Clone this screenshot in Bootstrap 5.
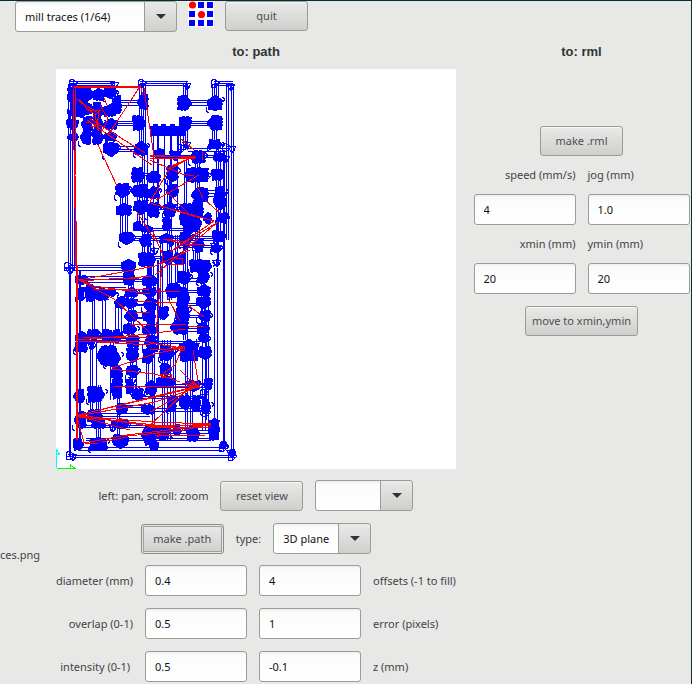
<!DOCTYPE html>
<html lang="en">
<head>
<meta charset="utf-8">
<meta name="viewport" content="width=device-width, initial-scale=1">
<title>mill traces</title>
<link href="https://cdn.jsdelivr.net/npm/bootstrap@5.3.0/dist/css/bootstrap.min.css" rel="stylesheet">
<style>
  body { background: #e8e8e6; color: #3f4446; font: 11px/18px "Noto Sans", "Open Sans", sans-serif; border-top: 1px solid #0b2a38; border-right: 1px solid #0b2f34; min-height: 100vh; overflow: hidden; }
  .top-bar { padding-left: 15px; }
  .btn-gtk { font-size: 11px; line-height: 18px; height: 30px; min-width: 83px; padding: 5px 6px; border: 1px solid #9b9b97; border-radius: 3px; color: #4a4f51; background: linear-gradient(#e9e9e7, #cfcfcd); box-shadow: inset 0 1px #f6f6f5; }
  .btn-gtk.is-focused { border-color: #8c8c89; box-shadow: inset 0 0 0 1px #e4e4e2, inset 0 0 0 2px #a0a09d; }
  .field, .picker { font-size: 11px; line-height: 18px; height: 31px; padding: 5px 9px; border: 1px solid #9b9b97; border-radius: 3px; color: #111; }
  .field { width: 102px; background: linear-gradient(#eee, #fbfbfb 3px, #fff); }
  .picker { width: 98px; appearance: none; padding-right: 33px;
    background: url("data:image/svg+xml,%3Csvg xmlns='http://www.w3.org/2000/svg' width='10' height='6'%3E%3Cpath d='M0 0h10L5 5z' fill='%232e3436'/%3E%3C/svg%3E") right 10px center no-repeat, linear-gradient(#9b9b97, #9b9b97) right 31px top no-repeat, linear-gradient(#e9e9e7, #cfcfcd) right top no-repeat, linear-gradient(#eee, #fbfbfb 3px, #fff);
    background-size: 10px 6px, 1px 100%, 31px 100%, auto; }
  .picker-wide { width: 162px; }
  .logo { width: 26px; height: 26px; margin: 0 11px; }
  .layout { display: grid; grid-template-columns: 50px minmax(0, 412fr) minmax(226px, 229fr); }
  .panel-title { font: bold 13px/18px "Liberation Sans", sans-serif; color: #2e3436; margin: 0; padding: 11px 0 8px; text-align: center; }
  .file-name { padding-top: 514px; }
  .toolpath { display: block; width: 100%; max-width: 400px; background: #fff; }
  .view-area { gap: 11px; }
  .stack { gap: 12px; }
  .params { display: grid; grid-template-columns: 83px 102px 102px 89px; gap: 12px; align-items: center; justify-content: center; padding-top: 11px; }
  .params label { white-space: nowrap; }
  .rml-panel { padding-left: 10px; }
  .rml { padding-top: 57px; gap: 10px; }
  .rml-fields { display: grid; grid-template-columns: 102px 102px; column-gap: 12px; row-gap: 10px; justify-content: center; align-items: center; margin-bottom: 2px; }
  .rml-fields label { height: 18px; }
</style>
<script src="https://cdn.jsdelivr.net/npm/bootstrap@5.3.0/dist/js/bootstrap.bundle.min.js"></script>
</head>
<body>
<header class="top-bar d-flex align-items-start">
  <select class="picker picker-wide" aria-label="Process"><option>mill traces (1/64)</option></select>
  <svg class="logo" viewBox="0 0 26 26" aria-hidden="true">
    <path fill="#fff" d="M0 0h26v26H0z"/>
    <path fill="#00f" d="M10 1h6v6h-6zM19 1h6v6h-6zM1 10h6v6H1zM19 10h6v6h-6zM1 19h6v6H1zM10 19h6v6h-6zM19 19h6v6h-6z"/>
    <circle cx="4.500" cy="4" r="3.600" fill="red"/><circle cx="13.500" cy="13.500" r="3.600" fill="red"/>
  </svg>
  <button type="button" class="btn btn-gtk">quit</button>
</header>
<main class="layout">
  <div class="file-name">ces.png</div>
  <section>
    <h2 class="panel-title">to: path</h2>
    <div class="view-area d-flex flex-column align-items-center">
      <svg class="toolpath" viewBox="56 69 400 400" shape-rendering="crispEdges" role="img" aria-label="Tool path">
        <path id="runs" stroke="#00f" fill="none"/>
        <path id="pads" fill="#00f"/>
        <path id="ticks" stroke="#00f" fill="none"/>
        <path id="moves" stroke="red" fill="none"/>
        <path stroke="#0ff" fill="none" d="M56.500 468V450l3 4-3 1"/>
        <path stroke="#0f0" fill="none" d="M57 468.500H75l-5-4v4"/>
      </svg>
      <div class="d-flex flex-column align-items-center stack">
        <div class="d-flex align-items-center stack">
          <span>left: pan, scroll: zoom</span>
          <button type="button" class="btn btn-gtk">reset view</button>
          <select class="picker" aria-label="View"><option></option></select>
        </div>
        <div class="d-flex align-items-center stack">
          <button type="button" class="btn btn-gtk is-focused">make .path</button>
          <label for="type">type:</label>
          <select class="picker" id="type"><option>3D plane</option></select>
        </div>
      </div>
    </div>
    <div class="params">
      <label class="text-end" for="diameter">diameter (mm)</label><input class="field" id="diameter" value="0.4"><input class="field" id="offsets" value="4"><label for="offsets">offsets (-1 to fill)</label>
      <label class="text-end" for="overlap">overlap (0-1)</label><input class="field" id="overlap" value="0.5"><input class="field" id="error" value="1"><label for="error">error (pixels)</label>
      <label class="text-end" for="intensity">intensity (0-1)&nbsp;</label><input class="field" id="intensity" value="0.5"><input class="field" id="z" value="-0.1"><label for="z">z (mm)</label>
    </div>
  </section>
  <section class="rml-panel">
    <h2 class="panel-title">to: rml</h2>
    <div class="rml d-flex flex-column align-items-center">
      <button type="button" class="btn btn-gtk">make .rml</button>
      <div class="rml-fields">
        <label class="text-end" for="speed">speed (mm/s)</label><label for="jog">jog (mm)</label>
        <input class="field" id="speed" value="4"><input class="field" id="jog" value="1.0">
        <label class="text-end" for="xmin">xmin (mm)</label><label for="ymin">ymin (mm)</label>
        <input class="field" id="xmin" value="20"><input class="field" id="ymin" value="20">
      </div>
      <button type="button" class="btn btn-gtk">move to xmin,ymin</button>
    </div>
  </section>
</main>
<script>
  // Filled pads: left, top, right, bottom
  const pads = [
    [69,87,88,112],[78,87,90,104],[93,88,104,100],[104,88,116,99],[111,96,121,113],[93,103,104,118],[70,106,80,116],[67,120,78,130],[81,117,92,131],[94,118,104,130],[105,118,117,129],[68,134,78,142],[80,130,91,144],[93,130,104,144],[105,131,116,141],[104,143,118,157],[137,95,148,109],[133,116,146,130],[135,141,147,155],
    [74,100,88,118],[80,104,92,114],[84,88,94,100],[104,104,116,116],[68,88,82,104],[70,100,82,114],
    [132,168,145,182],[147,171,157,182],[116,184,129,198],[131,185,147,197],[178,96,192,110],[208,95,222,110],[180,117,191,131],[207,116,222,130],[209,140,222,149],[155,148,164,157],[170,151,180,161],[190,151,205,163],[214,154,225,161],
    [150,171,160,182],[167,166,178,182],[184,168,208,182],[212,170,225,180],[148,186,159,198],[167,185,178,198],[191,188,208,202],[215,187,226,201],[117,203,131,215],[134,201,148,215],[146,203,159,217],[134,222,143,230],[141,225,152,232],[120,233,133,245],[139,235,151,246],[139,253,156,266],
    [164,202,175,216],[180,204,193,228],[190,200,203,217],[185,214,202,232],[205,212,211,223],[215,199,226,210],[217,213,227,223],[163,217,172,230],[160,233,173,243],[180,233,191,246],[193,239,203,252],[213,231,226,242],[212,243,220,252],[162,251,173,265],[172,253,185,264],[190,260,212,272],
    [122,259,135,271],[76,276,87,285],[77,288,84,300],[86,285,97,301],[96,287,108,300],[108,290,116,297],[114,297,124,308],[124,272,136,285],[126,287,137,297],[124,299,137,309],[124,311,137,321],[124,324,137,334],
    [143,274,156,286],[143,288,156,298],[143,299,156,310],[143,312,156,321],[143,324,156,334],[178,272,190,285],[165,284,180,297],[177,288,190,308],[176,305,189,321],[158,307,168,320],[170,320,188,334],[198,270,210,283],[198,284,210,296],[197,297,210,309],[198,311,210,321],[198,323,210,334],
    [76,331,87,344],[88,330,99,341],[100,330,112,341],[113,330,123,342],[75,339,87,352],[90,341,94,350],[96,346,116,365],[105,350,121,366],[127,334,139,347],[127,348,138,363],[144,336,156,348],[143,349,154,363],[112,365,122,378],[127,366,138,378],[110,378,122,398],[126,380,134,393],[146,380,156,394],[132,389,143,401],
    [73,390,84,402],[88,387,105,402],[117,403,127,414],[142,405,153,415],[74,412,86,428],[88,410,103,422],[92,418,105,428],[112,420,128,429],[141,425,156,445],[74,439,84,450],[90,437,107,450],[113,435,128,449],
    [150,345,158,352],[160,346,175,360],[180,339,198,361],[199,347,211,360],[198,334,208,342],[161,364,172,374],[157,375,174,386],[187,381,200,392],[203,379,212,389],[150,385,157,395],[168,395,176,411],[180,396,190,410],[190,396,200,411],[202,400,211,413],[209,418,219,440],[156,427,169,441],[172,425,180,435],[187,427,200,441],[150,440,158,450],[221,442,226,449],[228,450,235,456]
  ];
  // Parallel vertical runs: x positions, top, bottom
  const vertical = [
    [[68,70,72,74],84,270],[[69,70],265,455],[[112,114],84,110],[[139,141,143,145],84,150],[[183,185,187],84,100],[[183,185,187],125,150],[[212,214,216,218],84,100],[[212,214,216],125,145],[[226,228,231,233],84,240],[[231,233],240,452],[[223,224],150,445],[[142,144,147],145,260],[[153,157,158,164,170,171,177],130,210],
    [[178,180],130,155],[[216,218,220],150,240],[[195,197,199],155,265],[[184,186],160,250],[[120,122,125,127],190,240],[[137,139],180,230],[[148,150,153],230,330],[[167,169,171],180,300],[[175,177],235,290],[[183,185,187],225,340],[[193,195],250,265],[[217,218],220,265],[[214,217],268,425],
    [[160,162],240,320],[[157,158],260,345],[[79,80],270,450],[[92,94],295,335],[[102,105],295,335],[[115,118,121],305,335],[[128,131,133],265,340],[[147,149,151],265,345],[[90,92,96],340,410],[[96,98,100],385,445],[[110,113],340,400],[[117,119],380,445],[[130,132,136],340,395],[[146,148],350,385],
    [[162,164,167,170],340,440],[[185,187,190,192],355,430],[[202,205,208],300,430],[[206,208],340,420],[[173,175],350,430],[[152,154],300,440],[[201,204],265,340]
  ];
  // Parallel horizontal runs: y positions, left, right
  const horizontal = [
    [[81,83,85],70,115],[[81,83,85],140,188],[[81,83,85],214,233],[[100,102,105],118,140],[[100,102,105],188,212],[[121,123,125],115,135],[[121,123,125],188,212],[[146,149,151],115,137],[[148,151],188,227],[[265,267,270],72,128],[[276,279,282],84,128],[[287,289],84,126],[[455,457],72,230],[[447,450],80,222],[[438,440],86,210],[[173,175],140,155],[[155,157],155,223],[[190,193,196],205,218],[[189,191],128,150],[[207,209],155,190],[[228,230],143,190],[[236,238,240],132,218],[[245,247],180,215],
    [[256,258],140,170],[[278,281],188,200],[[290,292],188,200],[[303,305],188,200],[[315,317],188,200],[[328,331],188,200],[[279,281],135,145],[[292,293],135,145],[[304,305],135,145],[[317,318],135,145],[[338,340],80,130],[[396,398],132,205],[[405,407],120,145],[[413,416],86,150],[[425,427],85,145],[[408,411],150,205],[[430,433],150,215],[[384,387],155,205],[[341,343],155,200]
  ];
  // Corner markers drawn as small open arrows
  const arrows = [[73,83],[115,84],[142,83],[187,85],[215,83],[231,86],[181,148],[187,144],[226,147],[232,148],[218,155],[226,158],[207,175],[70,270],[68,266],[217,262],[70,455],[73,456],[223,447],[231,452],[232,456],[216,422],[206,412],[113,427],[121,407],[152,410],[135,388],[164,368],[204,393],[94,343],[137,226],[78,444],[189,400],[133,379],[221,235],[171,242],[196,246],[155,250],[190,236],[215,245]];
  // Rapid moves between cuts
  const moves = [
    "M74 86H141M74 87H141M73 88L74 150 76 265 78 440M75 88V175L77 265V415M76 230V440M141 85L108 135M144 88L153 150M87 120L152 165M89 118L145 153M98 145L117 186M76 98L95 115 98 130M85 105l14 8-2 14M100 105l8 14-8 16",
    "M79 99l5 5 3 6 10 1M88 110h10v5M93 116l8-6M86 122l12 3v6M97 118v8h-6M104 98l3 7M141 88l2 7M150 130L154 156M150 155l46 3-46 1M150 156h46l-25 10M172 168l20-11-25 12M150 160l32 14 12 2M150 202l20-34M156 200l43-25M180 138l14 12M202 152v8M150 203L214 221 170 252M165 190l25 25M197 185l6 14",
    "M205 200L221 214M150 203L200 218M137 212L155 240M152 230L163 255 156 333M170 252L218 222 155 275M165 239l30 4M163 239l22 5 20 0M170 258l12 0 0 6-12 0M79 280L155 266 190 250M79 280L114 299 150 333M79 281l30-2 30-1M78 279L94 286 150 294M92 289l42 1",
    "M155 291h25M155 302h22M155 324h31M168 298l12 23M188 305l16 12M188 327l16-1M156 333l30-4M135 289h14M135 301h17M135 312h15M130 278l22-2M130 324h20M78 340L150 334M80 341L150 345M79 341h65l38 8M83 337h65M112 368L154 354 182 348",
    "M110 369l44 5M114 386h40L195 386M78 415L156 397 196 387M79 415L197 386 150 412M78 416L155 402 198 387M78 416l75 6 58 2M79 417l76 8h56M80 415L155 427 211 424M78 416L130 430M78 420L84 443 127 435 210 425M85 443H98M102 442l25-5M127 436L180 431 211 424",
    "M193 350L199 388M182 348L175 365 160 376M154 374l12 3 14 5M180 370l17 17-15-4M187 390l12-4-12-4M160 374l11 0 0 3-11 0M150 350l34-2M150 343l33 5M145 430L182 395M150 425h60M150 427h60M155 435h50M157 431l3 4-4 3M116 424l5-6 2 6M194 386l6 0M178 346h6v4h-6zM192 381l8 6-9 1"
  ];
  let seed = 7;
  const rnd = () => (seed = (seed * 16807) % 2147483647) / 2147483647;
  let padPath = "M150 126h3v-2h5v2h3v-2h5v2h4v-2h5v2h4v-2h6v12h-35z", runPath = "", tickPath = "";
  pads.forEach(([l, t, r, b], n) => {
    // A solid block with uneven one-pixel edges and a stepped tip on one side
    const w = r - l, h = b - t, p = n % 4;
    const tip = Math.max(1, Math.round(Math.min(w, h) / 4));
    const L = l + (p === 0 ? tip : 0), R = r - (p === 1 ? tip : 0), T = t + (p === 2 ? tip : 0), B = b - (p === 3 ? tip : 0);
    padPath += `M${L} ${T}H${R}V${B}H${L}Z`;
    for (let i = 1; i <= tip; i++) {
      const ew = Math.max(2, Math.round((R - L) * (1 - i / (tip + 1)))), eh = Math.max(2, Math.round((B - T) * (1 - i / (tip + 1))));
      const ex = L + Math.round((R - L - ew) / 2), ey = T + Math.round((B - T - eh) / 2);
      padPath += [`M${L - i} ${ey}h1v${eh}h-1z`, `M${R + i - 1} ${ey}h1v${eh}h-1z`, `M${ex} ${T - i}h${ew}v1h-${ew}z`, `M${ex} ${B + i - 1}h${ew}v1h-${ew}z`][p];
    }
    for (let i = 0; i < 3; i++) {
      const x = L + Math.floor(rnd() * (R - L - 2)), y = T + Math.floor(rnd() * (B - T - 2));
      padPath += `M${x} ${T - 1}h3v1h-3zM${x} ${B}h2v1h-2zM${L - 1} ${y}h1v3h-1zM${R} ${y}h1v2h-1z`;
    }
    if (n % 3 === 0) tickPath += `M${l - 2} ${b - 3}v4l3 2M${r} ${t + 2}l3 2-2 3`;
  });
  vertical.forEach(([xs, a, b]) => xs.forEach(x => runPath += `M${x + .5} ${a}V${b}`));
  horizontal.forEach(([ys, a, b]) => ys.forEach(y => runPath += `M${a} ${y + .5}H${b}`));
  arrows.forEach(([x, y], n) => tickPath += n % 2
    ? `M${x - 5} ${y - 2}h9l-4 7-4-6M${x - 1} ${y - 3}v8l4-3`
    : `M${x - 4} ${y + 4}v-6l3-2 6 4-4 4h-5M${x} ${y - 3}v7M${x - 3} ${y + 1}h7`);
  document.getElementById("pads").setAttribute("d", padPath);
  document.getElementById("runs").setAttribute("d", runPath);
  document.getElementById("ticks").setAttribute("d", tickPath);
  document.getElementById("moves").setAttribute("d", moves.join(""));
</script>
</body>
</html>
